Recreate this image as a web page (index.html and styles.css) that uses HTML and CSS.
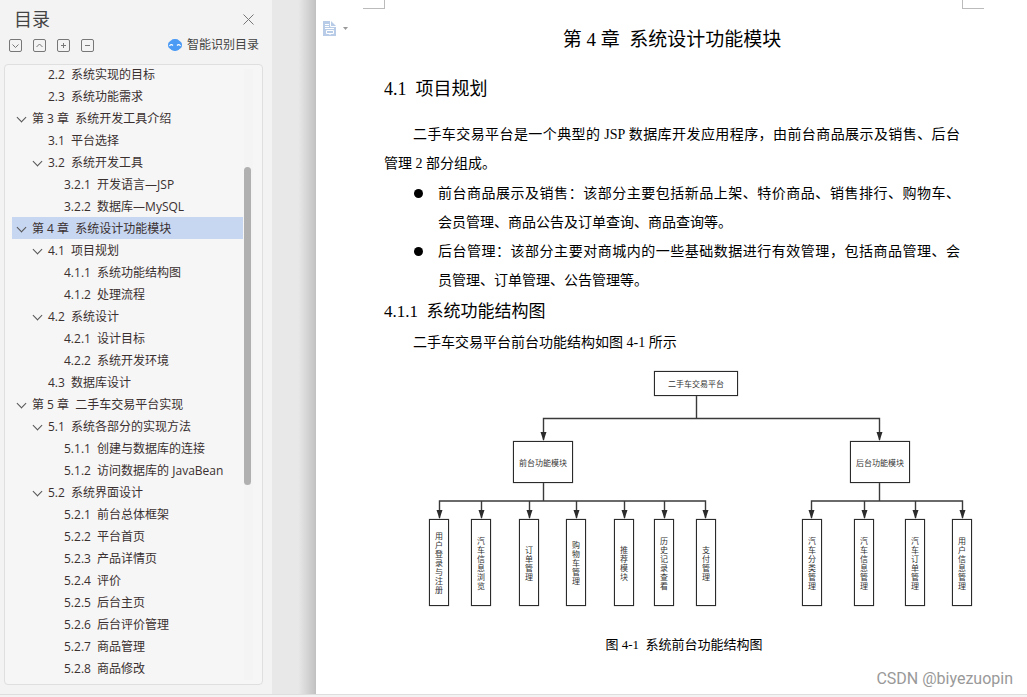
FILE: index.html
```html
<!DOCTYPE html>
<html lang="zh-CN">
<head>
<meta charset="utf-8">
<title>目录</title>
<link rel="stylesheet" href="styles.css">
</head>
<body>
<div class="app">
  <aside class="sidebar">
    <header class="head">
      <h2 class="head-title">目录</h2>
      <button class="icon-btn" type="button" aria-label="关闭"><svg width="11" height="11" viewBox="0 0 11 11"><path d="M.5.5l10 10M10.5.5l-10 10"/></svg></button>
    </header>
    <div class="tools">
      <button class="icon-btn" type="button" aria-label="展开"><svg width="13" height="13" viewBox="0 0 13 13"><rect x=".5" y=".5" width="12" height="12" rx="1.5"/><path d="M3.5 5.5l3 3 3-3"/></svg></button>
      <button class="icon-btn" type="button" aria-label="收起"><svg width="13" height="13" viewBox="0 0 13 13"><rect x=".5" y=".5" width="12" height="12" rx="1.5"/><path d="M3.5 8l3-3 3 3"/></svg></button>
      <button class="icon-btn" type="button" aria-label="增加"><svg width="13" height="13" viewBox="0 0 13 13"><rect x=".5" y=".5" width="12" height="12" rx="1.5"/><path d="M4 6.5h5M6.5 4v5"/></svg></button>
      <button class="icon-btn" type="button" aria-label="减少"><svg width="13" height="13" viewBox="0 0 13 13"><rect x=".5" y=".5" width="12" height="12" rx="1.5"/><path d="M4 6.5h5"/></svg></button>
      <button class="smart" type="button"><svg width="14" height="12" viewBox="0 0 14 12"><rect x="1.500" width="11" height="12" rx="5" fill="#4b9bf5"/><rect y="2" width="14" height="8" rx="4" fill="#4b9bf5"/><path d="M1.500 7q1.500-2.500 3.500-.5M9 6.500q2-2 3.500.5" fill="none" stroke="#fff" stroke-width="1.200"/></svg>智能识别目录</button>
    </div>
    <div class="panel">
      <nav class="toc" aria-label="目录">
        <a class="row l2" href="#">2.2  系统实现的目标</a>
        <a class="row l2" href="#">2.3  系统功能需求</a>
        <a class="row l1 open" href="#">第 3 章  系统开发工具介绍</a>
        <a class="row l2" href="#">3.1  平台选择</a>
        <a class="row l2 open" href="#">3.2  系统开发工具</a>
        <a class="row l3" href="#">3.2.1  开发语言—JSP</a>
        <a class="row l3" href="#">3.2.2  数据库—MySQL</a>
        <a class="row l1 open current" href="#">第 4 章  系统设计功能模块</a>
        <a class="row l2 open" href="#">4.1  项目规划</a>
        <a class="row l3" href="#">4.1.1  系统功能结构图</a>
        <a class="row l3" href="#">4.1.2  处理流程</a>
        <a class="row l2 open" href="#">4.2  系统设计</a>
        <a class="row l3" href="#">4.2.1  设计目标</a>
        <a class="row l3" href="#">4.2.2  系统开发环境</a>
        <a class="row l2" href="#">4.3  数据库设计</a>
        <a class="row l1 open" href="#">第 5 章  二手车交易平台实现</a>
        <a class="row l2 open" href="#">5.1  系统各部分的实现方法</a>
        <a class="row l3" href="#">5.1.1  创建与数据库的连接</a>
        <a class="row l3" href="#">5.1.2  访问数据库的 JavaBean</a>
        <a class="row l2 open" href="#">5.2  系统界面设计</a>
        <a class="row l3" href="#">5.2.1  前台总体框架</a>
        <a class="row l3" href="#">5.2.2  平台首页</a>
        <a class="row l3" href="#">5.2.3  产品详情页</a>
        <a class="row l3" href="#">5.2.4  评价</a>
        <a class="row l3" href="#">5.2.5  后台主页</a>
        <a class="row l3" href="#">5.2.6  后台评价管理</a>
        <a class="row l3" href="#">5.2.7  商品管理</a>
        <a class="row l3" href="#">5.2.8  商品修改</a>
      </nav>
      <div class="track"><div class="thumb"></div></div>
    </div>
  </aside>
  <div class="gutter"></div>
  <main class="page">
    <div class="marks"><span class="mark mark-left"></span><span class="mark mark-right"></span></div>
    <button class="doc-btn" type="button" aria-label="文档选项">
      <svg width="26" height="15" viewBox="0 0 26 15"><path d="M0 0h8l5 5v10H0z" fill="#b8cce8"/><path d="M7.500 0v5.500H13M2 3.500h4M2 5.500h4M2 7.500h9M3.500 9.500h7v3h-7zM7 12.500v1.500" fill="none" stroke="#fff"/><path d="M20 6h5l-2.500 3z" fill="#999"/></svg>
    </button>
    <article class="doc">
      <h1 class="chapter">第 4 章  系统设计功能模块</h1>
      <h2 class="section">4.1  项目规划</h2>
      <p class="para"><span class="full">二手车交易平台是一个典型的 JSP 数据库开发应用程序，由前台商品展示及销售、后台</span>管理 2 部分组成。</p>
      <ul class="points">
        <li><span class="full">前台商品展示及销售：该部分主要包括新品上架、特价商品、销售排行、购物车、</span>会员管理、商品公告及订单查询、商品查询等。</li>
        <li><span class="full">后台管理：该部分主要对商城内的一些基础数据进行有效管理，包括商品管理、会</span>员管理、订单管理、公告管理等。</li>
      </ul>
      <h3 class="subsection">4.1.1  系统功能结构图</h3>
      <p class="para lead">二手车交易平台前台功能结构如图 4-1 所示</p>
      <figure class="figure">
        <div class="chart">
          <svg class="links" width="546" height="238" viewBox="0 0 546 238">
            <g fill="none" stroke="#3a3a3a" stroke-width="1.400">
              <path d="M268.500 26v22.500M115.500 113v18M451.500 113v18"/>
              <path d="M115.500 70V48.500h336V70M11.500 148V131h266v17M383.500 148V131h151v17"/>
              <path d="M53.500 131v17M101.500 131v17M148.500 131v17M196.500 131v17M236.500 131v17M436.500 131v17M487.500 131v17"/>
            </g>
            <path fill="#2b2b2b" d="M112.500 62h6l-3 9zM448.500 62h6l-3 9zM8.500 140h6l-3 9zM50.500 140h6l-3 9zM98.500 140h6l-3 9zM145.500 140h6l-3 9zM193.500 140h6l-3 9zM233.500 140h6l-3 9zM274.500 140h6l-3 9zM380.500 140h6l-3 9zM433.500 140h6l-3 9zM484.500 140h6l-3 9zM531.500 140h6l-3 9z"/>
          </svg>
          <div class="node root">二手车交易平台</div>
          <div class="node module front">前台功能模块</div>
          <div class="node module back">后台功能模块</div>
          <div class="node leaf f1">用户登录与注册</div>
          <div class="node leaf f2">汽车信息浏览</div>
          <div class="node leaf f3">订单管理</div>
          <div class="node leaf f4">购物车管理</div>
          <div class="node leaf f5">推荐模块</div>
          <div class="node leaf f6">历史记录查看</div>
          <div class="node leaf f7">支付管理</div>
          <div class="node leaf b1">汽车分类管理</div>
          <div class="node leaf b2">汽车信息管理</div>
          <div class="node leaf b3">汽车订单管理</div>
          <div class="node leaf b4">用户信息管理</div>
        </div>
        <figcaption class="caption">图 4-1  系统前台功能结构图</figcaption>
      </figure>
    </article>
    <span class="watermark">CSDN @biyezuopin</span>
  </main>
</div>
</body>
</html>
```
FILE: styles.css
```css
* { box-sizing: border-box; }
body {
  margin: 0;
  background: #f3f3f3;
  font-family: "Open Sans", "Noto Sans CJK SC", sans-serif;
}
button { border: 0; padding: 0; background: none; font: inherit; color: inherit; }
.app {
  display: grid;
  grid-template-columns: 272px 44px minmax(0, 1fr);
  min-height: 100vh;
  border-bottom: 2px solid #f3f3f3;
}
.sidebar {
  display: flex;
  flex-direction: column;
  padding: 8px 9px 9px 4px;
  background: #f3f3f3;
  border-bottom: 1px solid #dedede;
}
.head { display: flex; align-items: center; justify-content: space-between; padding: 0 9px 0 10px; }
.head-title { margin: 0; font-size: 18px; line-height: 22px; font-weight: 400; color: #444; }
.icon-btn { display: flex; }
.icon-btn svg { fill: none; stroke: #777; }
.tools { display: flex; align-items: center; gap: 11px; padding: 5px 4px 0 5px; }
.smart { display: flex; align-items: center; gap: 5px; margin-left: auto; font-size: 12px; line-height: 20px; color: #444; }
.panel {
  position: relative;
  flex: 1;
  margin-top: 9px;
  padding: 4px 19px 4px 7px;
  border: 1px solid #dfdfdf;
  border-radius: 4px;
  background: #f6f6f6;
}
.row {
  display: flex;
  align-items: center;
  height: 22px;
  font-size: 12px;
  white-space: pre;
  color: #3a3030;
  text-decoration: none;
}
.row:first-child { margin-top: -6px; }
.l1 { padding-left: 20px; }
.l2 { padding-left: 36px; }
.l3 { padding-left: 52px; }
.open::before {
  content: "";
  width: 6px;
  height: 6px;
  margin: -1px 7px 0 -13px;
  border: solid #555;
  border-width: 0 1px 1px 0;
  transform: rotate(45deg);
}
.open { padding-left: 19px; }
.l2.open { padding-left: 35px; }
.current { background: #c8d7f1; }
.track { position: absolute; top: 4px; right: 9px; bottom: 4px; width: 9px; background: #f4f4f4; }
.thumb { width: 7px; height: 52%; margin-top: 98px; border-radius: 4px; background: #b0b0b0; }
.gutter { background: linear-gradient(to right, #e8e8e8 60%, #c6c6c6 95%, #c0c0c0); border-bottom: 1px solid #dedede; }
.page { position: relative; background: #fff; border-bottom: 1px solid #dedede; }
.marks { display: flex; justify-content: space-between; padding: 0 43px 0 47px; }
.mark { width: 22px; height: 9px; border-bottom: 1px solid #bbb; }
.mark-left { border-right: 1px solid #bbb; }
.mark-right { border-left: 1px solid #bbb; }
.doc-btn { position: absolute; top: 21px; left: 7px; display: flex; }
.doc {
  padding: 16px 67px 0 68px;
  font-family: "Liberation Serif", "Noto Sans CJK SC", serif;
  color: #000;
}
.chapter, .section, .subsection { margin: 0; font-weight: 400; white-space: pre; }
.chapter { font-size: 19px; line-height: 30px; text-align: center; }
.section { margin-top: 20px; font-size: 18px; line-height: 28px; }
.para { margin: 17px 0 0; font-size: 14px; line-height: 29px; }
.full { display: block; text-align-last: justify; }
.para .full { padding-left: 29px; }
.points { margin: 1px 0 0; padding-left: 54px; list-style: none; font-size: 14px; line-height: 29px; }
.points li { position: relative; }
.points li::before {
  content: "";
  position: absolute;
  top: 10px;
  left: -24px;
  width: 9px;
  height: 9px;
  border-radius: 50%;
  background: #000;
}
.subsection { margin-top: 4px; font-size: 17px; line-height: 26px; }
.lead { margin-top: 3px; padding-left: 29px; }
.figure { margin: 13px 0 0; }
.chart {
  position: relative;
  width: 546px;
  height: 238px;
  margin-left: 44px;
  font-family: "Noto Sans CJK SC", sans-serif;
  font-size: 8px;
  line-height: 9px;
  color: #333;
}
.links { display: block; }
.node {
  position: absolute;
  display: flex;
  align-items: center;
  justify-content: center;
  border: 1px solid #2b2b2b;
  box-shadow: 0 0 1px #777;
  background: #fff;
}
.root { left: 226px; top: 1px; width: 84px; height: 25px; }
.module { top: 71px; width: 60px; height: 42px; }
.front { left: 85px; }
.back { left: 422px; }
.leaf { top: 149px; width: 20px; height: 87px; padding: 0 5px; text-align: center; }
.f1 { left: 1px; }
.f2 { left: 43px; }
.f3 { left: 91px; }
.f4 { left: 138px; }
.f5 { left: 186px; }
.f6 { left: 226px; }
.f7 { left: 268px; }
.b1 { left: 374px; }
.b2 { left: 426px; }
.b3 { left: 477px; }
.b4 { left: 524px; }
.caption { margin: 27px 0 0; padding-left: 24px; font-size: 13px; line-height: 20px; text-align: center; white-space: pre; }
.watermark {
  position: absolute;
  right: 14px;
  bottom: 5px;
  font-family: Roboto, sans-serif;
  font-size: 16px;
  line-height: 20px;
  color: #999;
}
```
